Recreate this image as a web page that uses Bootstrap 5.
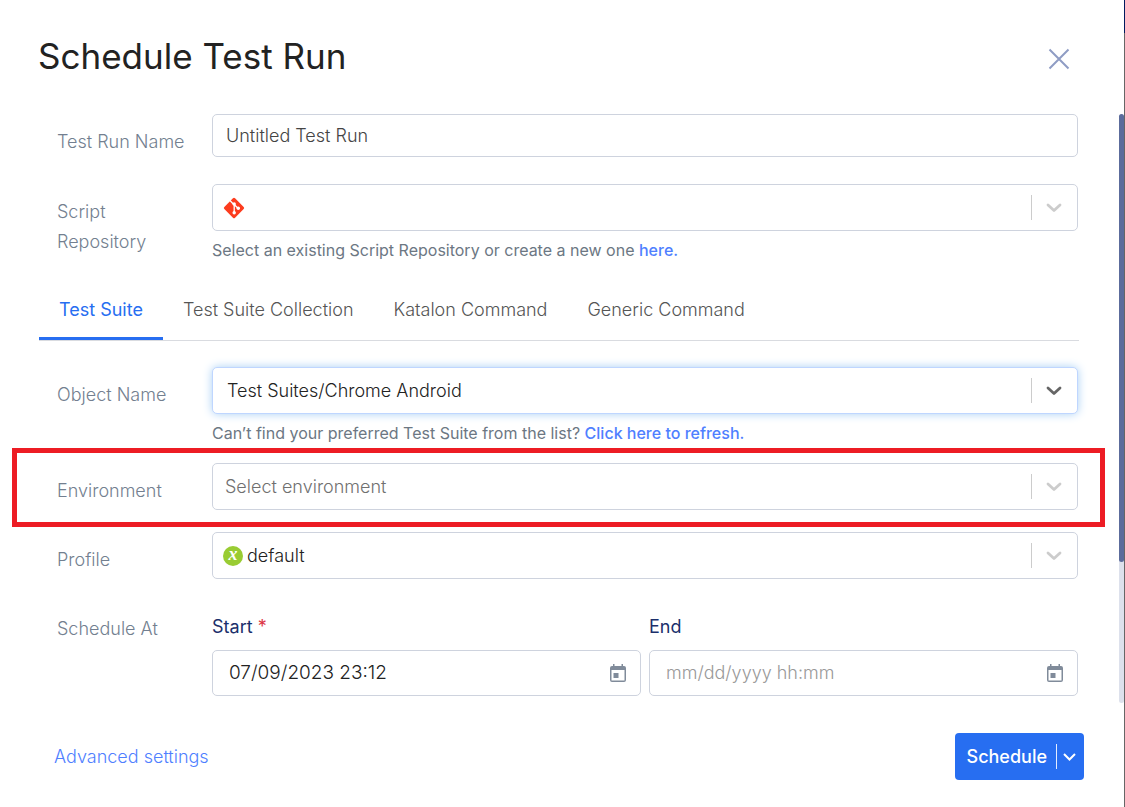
<!DOCTYPE html>
<html lang="en">
<head>
<meta charset="utf-8">
<meta name="viewport" content="width=device-width, initial-scale=1">
<title>Schedule Test Run</title>
<link href="https://cdn.jsdelivr.net/npm/bootstrap@5.3.0/dist/css/bootstrap.min.css" rel="stylesheet">
<style>
  body { font-family: Inter, "Liberation Sans", sans-serif; font-size: 18px; font-weight: 300; line-height: 30px; color: #333; background: #fff; }
  a { text-decoration: none; color: #4f7fff; }
  .page-edge { width: 1px; background: linear-gradient(#001a5e 33px, #666 33px); }
  .dialog-head { padding: 32px 50px 32px 38px; }
  .dialog-title { font-size: 35px; line-height: 48px; font-weight: 400; color: #222; }
  .close-btn { height: 50px; }
  .dialog-body { padding: 0 40px 7px 39px; }
  .scroll-track { width: 5px; background: #dde1ec; border-radius: 3px; }
  .scroll-thumb { height: 76%; background: #5c6c9c; border-radius: 3px; }
  .form-line { display: grid; grid-template-columns: 135px minmax(0, 1fr); column-gap: 20px; padding-left: 18px; padding-right: 1px; margin-bottom: 22px; }
  .form-line.name-line { margin-bottom: 27px; }
  .form-line.hinted { margin-bottom: 18px; }
  .line-label { padding-top: 13px; color: #737f90; }
  .hint { margin-top: 7px; font-size: 16px; font-weight: 400; line-height: 24px; color: #6c7783; }
  .hint a { font-weight: 500; }
  .field { border: 1px solid #ced3de; border-radius: 5px; background: #fff; }
  .field input, .field select { border: 0; outline: 0; background: transparent; appearance: none; padding: 0; color: #222; min-width: 0; font-weight: 300; }
  .field input::placeholder { color: #999; opacity: 1; font-size: 18px; }
  .text-field { height: 43px; padding: 0 13px; }
  .text-field input { color: #444; }
  .pick-field { height: 47px; padding-left: 10px; }
  .pick-field.no-icon { padding-left: 12px; }
  .pick-field .arrow { width: 46px; height: 25px; padding-right: 2px; border-left: 1px solid #ccc; color: #ccc; }
  .pick-field.is-active { border-color: #bfd6ff; box-shadow: 0 0 10px #a9d0f5; padding-left: 14px; }
  .pick-field.is-active .arrow { color: #666; }
  .pick-field .is-empty { color: #707070; }
  .profile-mark { width: 20px; height: 20px; padding-bottom: 4px; border-radius: 50%; background: #9c3; color: #fff; font: italic 700 18px/16px "Liberation Serif", serif; text-align: center; }
  .date-field { height: 46px; padding: 0 14px 0 16px; }
  .date-field input { font-size: 19px; }
  .date-group { padding-top: 11px; }
  .date-label { color: #1b2f6b; font-weight: 400; margin-bottom: 8px; }
  .suite-tabs { margin: 0 0 26px; padding-top: 21px; border-bottom: 1px solid #d9dbe0; }
  .suite-tabs .nav-link { padding: 12px 20px; border-radius: 0; border-bottom: 3px solid transparent; color: #555; }
  .suite-tabs .nav-link.active { color: #276ef1; border-color: #276ef1; font-weight: 400; }
  .callout-frame { position: absolute; inset: -15px -26px -17px -27px; border: 5px solid #ed1c24; pointer-events: none; }
  .dialog-foot { padding: 30px 40px 27px 54px; }
  .schedule-btn { height: 47px; background: #276ef1; color: #fff; border-radius: 4px; }
  .schedule-btn button { border: 0; background: transparent; color: #fff; font-weight: 500; }
  .schedule-btn .main-part { padding: 0 9px 0 12px; }
  .schedule-btn .menu-part { width: 28px; height: 25px; border-left: 1px solid #e3ecff; padding: 0 2px 0 0; }
</style>
</head>
<body>
<svg class="d-none" aria-hidden="true">
  <symbol id="chev" viewBox="0 0 16 10"><path d="M2 2l6 5.500L14 2" fill="none" stroke="currentColor" stroke-width="2.800" stroke-linecap="round" stroke-linejoin="round"/></symbol>
  <symbol id="cal" viewBox="0 0 16 18"><path fill="currentColor" fill-rule="evenodd" d="M3 0h1.500v2h7V0H13v2h1a2 2 0 0 1 2 2v12a2 2 0 0 1-2 2H2a2 2 0 0 1-2-2V4a2 2 0 0 1 2-2h1zM1.500 6v10.500h13V6zM3.500 9h5v5h-5z"/></symbol>
</svg>
<div class="d-flex min-vh-100">
  <main class="flex-fill d-flex flex-column">
    <header class="dialog-head d-flex justify-content-between align-items-start">
      <h1 class="dialog-title m-0">Schedule Test Run</h1>
      <button type="button" class="close-btn btn p-0 border-0 d-flex align-items-center" aria-label="Close">
        <svg width="30" height="30" viewBox="0 0 30 30" fill="none" stroke="#8f9cc4" stroke-width="2"><path d="M5.500 7.500l19 19M24.500 7.500l-19 19"/></svg>
      </button>
    </header>

    <div class="d-flex">
      <form class="dialog-body flex-fill" id="run-form">
        <div class="form-line name-line">
          <label class="line-label" for="run-name">Test Run Name</label>
          <div><div class="field text-field d-flex"><input id="run-name" class="flex-fill" type="text" value="Untitled Test Run"></div></div>
        </div>
        <div class="form-line mb-0">
          <label class="line-label" for="repo">Script<br>Repository</label>
          <div>
            <div class="field pick-field d-flex align-items-center">
              <svg width="22" height="22" viewBox="0 0 22 22"><rect x="3.400" y="3.400" width="15.200" height="15.200" rx="1.500" transform="rotate(45 11 11)" fill="#fc3c1e"/><path d="M7 3.500l4.200 4.500v8M11.200 7.500l4 4" stroke="#fff" stroke-width="1.300" fill="none"/><g fill="#fff"><circle cx="11.200" cy="7" r="1.700"/><circle cx="11.200" cy="15.800" r="1.700"/><circle cx="15.300" cy="11.300" r="1.700"/></g></svg>
              <select id="repo" class="flex-fill"><option></option></select>
              <span class="arrow d-flex align-items-center justify-content-center"><svg width="16" height="10"><use href="#chev"/></svg></span>
            </div>
            <div class="hint">Select an existing Script Repository or create a new one <a href="#">here.</a></div>
          </div>
        </div>

        <nav class="suite-tabs nav">
          <a class="nav-link active" href="#">Test Suite</a>
          <a class="nav-link" href="#">Test Suite Collection</a>
          <a class="nav-link" href="#">Katalon Command</a>
          <a class="nav-link" href="#">Generic Command</a>
        </nav>

        <div class="form-line hinted">
          <label class="line-label" for="object">Object Name</label>
          <div>
            <div class="field pick-field is-active d-flex align-items-center">
              <select id="object" class="flex-fill"><option>Test Suites/Chrome Android</option></select>
              <span class="arrow d-flex align-items-center justify-content-center"><svg width="16" height="10"><use href="#chev"/></svg></span>
            </div>
            <div class="hint">Can’t find your preferred Test Suite from the list? <a href="#">Click here to refresh.</a></div>
          </div>
        </div>
        <div class="form-line position-relative">
          <label class="line-label" for="env">Environment</label>
          <div>
            <div class="field pick-field no-icon d-flex align-items-center">
              <select id="env" class="is-empty flex-fill"><option>Select environment</option></select>
              <span class="arrow d-flex align-items-center justify-content-center"><svg width="16" height="10"><use href="#chev"/></svg></span>
            </div>
          </div>
          <div class="callout-frame"></div>
        </div>
        <div class="form-line">
          <label class="line-label" for="profile">Profile</label>
          <div>
            <div class="field pick-field d-flex align-items-center">
              <span class="profile-mark me-1" aria-hidden="true">x</span>
              <select id="profile" class="flex-fill"><option>default</option></select>
              <span class="arrow d-flex align-items-center justify-content-center"><svg width="16" height="10"><use href="#chev"/></svg></span>
            </div>
          </div>
        </div>
        <div class="form-line mb-0">
          <div class="line-label">Schedule At</div>
          <div class="date-group row row-cols-2 gx-2">
            <div class="col">
              <label class="date-label d-block" for="start">Start <span class="text-danger">*</span></label>
              <div class="field date-field d-flex align-items-center"><input id="start" class="flex-fill" type="text" value="07/09/2023 23:12"><svg width="16" height="18" color="#808b9a"><use href="#cal"/></svg></div>
            </div>
            <div class="col">
              <label class="date-label d-block" for="end">End</label>
              <div class="field date-field d-flex align-items-center"><input id="end" class="flex-fill" type="text" placeholder="mm/dd/yyyy hh:mm"><svg width="16" height="18" color="#808b9a"><use href="#cal"/></svg></div>
            </div>
          </div>
        </div>
      </form>
      <div class="scroll-track"><div class="scroll-thumb"></div></div>
    </div>

    <footer class="dialog-foot d-flex align-items-center justify-content-between">
      <a href="#">Advanced settings</a>
      <div class="schedule-btn d-flex align-items-center">
        <button class="main-part" type="submit" form="run-form">Schedule</button>
        <button class="menu-part d-flex align-items-center justify-content-center" type="button" aria-label="More schedule options"><svg width="13" height="8" viewBox="0 0 13 8"><path d="M1 1l5.500 5.500L12 1" fill="none" stroke="currentColor" stroke-width="2"/></svg></button>
      </div>
    </footer>
  </main>
  <div class="page-edge"></div>
</div>
<script src="https://cdn.jsdelivr.net/npm/bootstrap@5.3.0/dist/js/bootstrap.bundle.min.js"></script>
</body>
</html>
